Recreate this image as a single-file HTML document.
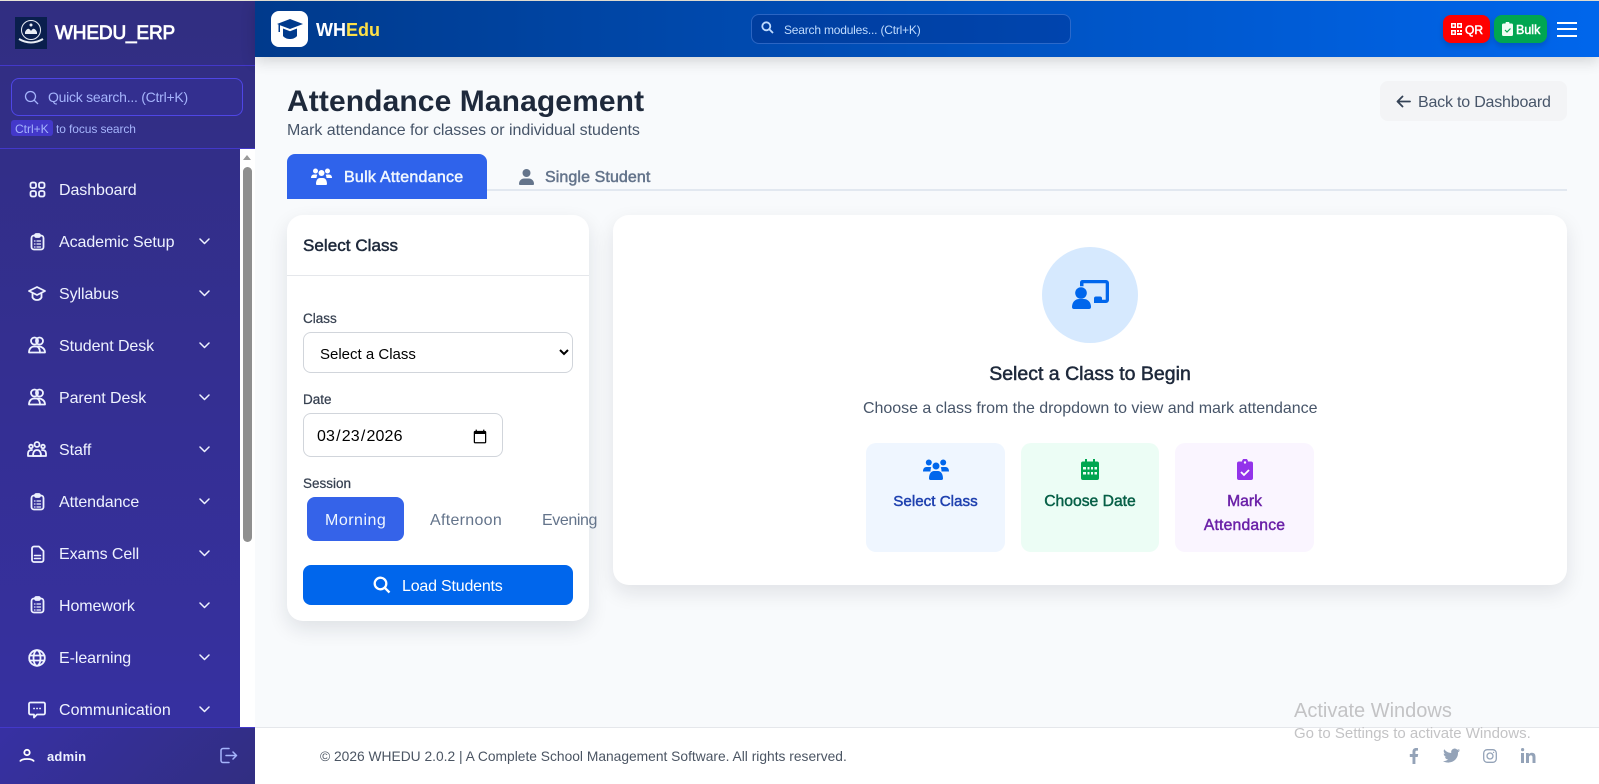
<!DOCTYPE html>
<html lang="en"><head><meta charset="utf-8"><title>Attendance Management</title>
<style>
*{box-sizing:border-box}
html,body{margin:0;padding:0;width:1599px;height:784px;overflow:hidden;background:#f8fafc;font-family:"Liberation Sans",sans-serif}
.a{position:absolute}
.t{position:absolute;white-space:nowrap;line-height:20px}
svg{position:absolute;display:block}
#side{left:0;top:1px;width:255px;height:783px;background:linear-gradient(180deg,#312e81,#3730a3)}
.mi{position:absolute;left:59px;font-size:16px;line-height:20px;color:#eef2ff;white-space:nowrap;letter-spacing:-.08px}
.ic{fill:none;stroke:#eef2ff;stroke-width:1.8;stroke-linecap:round;stroke-linejoin:round}
.lb{font-size:13.5px;color:#374151;-webkit-text-stroke:.25px #374151}
.mc{font-size:15.7px;-webkit-text-stroke:.45px currentColor;text-align:center}
</style></head><body>
<div class="a" style="left:0;top:0;width:1599px;height:1px;background:#e8e4d8"></div>
<div class="a" style="left:255px;top:1px;width:1344px;height:56px;background:linear-gradient(90deg,#003a8c,#0066ec);box-shadow:0 4px 14px rgba(0,0,0,.16);z-index:3"></div>

<!-- SIDEBAR -->
<div class="a" id="side"></div>
<div class="a" style="left:15px;top:17px;width:32px;height:32px;background:#0a1f4d"></div>
<svg style="left:15px;top:17px" width="32" height="32" viewBox="0 0 32 32" fill="none" stroke="#e8edf5"><circle cx="16" cy="13" r="9.5" stroke-width="1"/><path d="M10 15q3-6 6-1q3-5 6 1v2H10z" fill="#e8edf5" stroke="none"/><circle cx="16" cy="8" r="1.5" fill="#e8edf5" stroke="none"/><path d="M4 22q12 7 24 0" stroke-width="2"/></svg>
<div class="t" style="left:55px;top:24px;font-size:19px;color:#fff;-webkit-text-stroke:.8px #fff;letter-spacing:-.15px">WHEDU_ERP</div>
<div class="a" style="left:0;top:65px;width:255px;height:1px;background:#4338ca"></div>
<div class="a" style="left:11px;top:78px;width:232px;height:38px;background:#332f8f;border:1px solid #4f46e5;border-radius:8px"></div>
<svg style="left:24px;top:90px" width="15" height="15" viewBox="0 0 15 15" fill="none" stroke="#a5b4fc" stroke-width="1.3"><circle cx="6.5" cy="6.5" r="5"/><path d="M10.2 10.2L14 14"/></svg>
<div class="t" style="left:48px;top:87px;font-size:14px;color:#a5b4fc;letter-spacing:-.25px">Quick search... (Ctrl+K)</div>
<div class="a" style="left:11px;top:120px;width:42px;height:16px;background:#4338ca;border-radius:3px"></div>
<div class="t" style="left:15px;top:119px;font-size:12px;color:#a5b4fc">Ctrl+K</div>
<div class="t" style="left:56px;top:119px;font-size:12px;color:#a5b4fc;letter-spacing:-.1px">to focus search</div>
<div class="a" style="left:0;top:148px;width:255px;height:1px;background:#4338ca"></div>
<div class="a" style="left:240px;top:149px;width:15px;height:578px;background:#fff"></div>
<div class="a" style="left:243px;top:155px;width:0;height:0;border-left:4px solid transparent;border-right:4px solid transparent;border-bottom:5px solid #9a9a9a"></div>
<div class="a" style="left:243px;top:167px;width:9px;height:375px;background:#8f8f8f;border-radius:5px"></div>

<svg class="ic" style="left:29px;top:181px" width="17" height="17" viewBox="0 0 17 17"><rect x="1.5" y="1.5" width="5.5" height="5.5" rx="1.8"/><rect x="10" y="1.5" width="5.5" height="5.5" rx="1.8"/><rect x="1.5" y="10" width="5.5" height="5.5" rx="1.8"/><rect x="10" y="10" width="5.5" height="5.5" rx="1.8"/></svg>
<div class="mi" style="top:181px">Dashboard</div>

<svg class="ic" style="left:29px;top:233px" width="17" height="18" viewBox="0 0 17 18"><rect x="2.5" y="2.5" width="12" height="14" rx="2.5"/><rect x="6" y="1" width="5" height="3" rx="1.2"/><path d="M5.5 8h.5M8 8h3.5M5.5 11h.5M8 11h3.5M5.500 14h.5M8 14h3.500" stroke-width="1.3"/></svg>
<div class="mi" style="top:233px">Academic Setup</div>

<svg class="ic" style="left:28px;top:285px" width="18" height="17" viewBox="0 0 18 17"><path d="M1 6l8-4 8 4-8 4z"/><path d="M4.5 8v4.5c1 1.6 3 2.5 4.500 2.500s3.500-.9 4.500-2.500V8"/></svg>
<div class="mi" style="top:285px">Syllabus</div>

<svg class="ic" style="left:28px;top:336px" width="18" height="18" viewBox="0 0 18 18"><circle cx="6.500" cy="5" r="3.500"/><circle cx="11.500" cy="5" r="3.500"/><path d="M1 16.500c0-4 2.500-6 5-6h5c2.500 0 6 2 6 6z"/><path d="M9 10.500c2 1 3 3 3 6"/></svg>
<div class="mi" style="top:337px">Student Desk</div>

<svg class="ic" style="left:28px;top:388px" width="18" height="18" viewBox="0 0 18 18"><circle cx="6.500" cy="5" r="3.500"/><circle cx="11.500" cy="5" r="3.500"/><path d="M1 16.500c0-4 2.500-6 5-6h5c2.500 0 6 2 6 6z"/><path d="M9 10.500c2 1 3 3 3 6"/></svg>
<div class="mi" style="top:389px">Parent Desk</div>

<svg class="ic" style="left:27px;top:441px" width="20" height="16" viewBox="0 0 20 16" stroke-width="1.500"><circle cx="10" cy="3.500" r="2.500"/><circle cx="4" cy="5.500" r="1.800"/><circle cx="16" cy="5.500" r="1.800"/><path d="M6 15c0-4 1.500-6 4-6s4 2 4 6z"/><path d="M1 15v-2.500C1 10 2.500 9 5 9M19 15v-2.500C19 10 17.500 9 15 9M1 15h18"/></svg>
<div class="mi" style="top:441px">Staff</div>

<svg class="ic" style="left:29px;top:493px" width="17" height="18" viewBox="0 0 17 18"><rect x="2.500" y="2.500" width="12" height="14" rx="2.500"/><rect x="6" y="1" width="5" height="3" rx="1.200"/><path d="M5.500 8h.5M8 8h3.500M5.500 11h.5M8 11h3.500M5.500 14h.5M8 14h3.500" stroke-width="1.300"/></svg>
<div class="mi" style="top:493px">Attendance</div>

<svg class="ic" style="left:29px;top:545px" width="17" height="18" viewBox="0 0 17 18"><path d="M5 1.500h5l4.500 4.500v9a2 2 0 0 1-2 2h-7.500a2 2 0 0 1-2-2v-11.500a2 2 0 0 1 2-2z"/><path d="M5.500 10.500h6M5.500 13.500h6" stroke-width="1.500"/></svg>
<div class="mi" style="top:545px">Exams Cell</div>

<svg class="ic" style="left:29px;top:596px" width="17" height="18" viewBox="0 0 17 18"><rect x="2.500" y="2.500" width="12" height="14" rx="2.500"/><rect x="6" y="1" width="5" height="3" rx="1.200"/><path d="M5.500 8h.5M8 8h3.500M5.500 11h.5M8 11h3.500M5.500 14h.5M8 14h3.500" stroke-width="1.300"/></svg>
<div class="mi" style="top:597px">Homework</div>

<svg class="ic" style="left:28px;top:649px" width="18" height="18" viewBox="0 0 18 18"><circle cx="9" cy="9" r="7.800"/><ellipse cx="9" cy="9" rx="3.500" ry="7.800"/><path d="M1.500 6.500h15M1.500 11.500h15"/></svg>
<div class="mi" style="top:649px">E-learning</div>

<svg class="ic" style="left:28px;top:701px" width="18" height="18" viewBox="0 0 18 18"><path d="M2.500 1.500h13a1.500 1.500 0 0 1 1.500 1.500v9a1.500 1.500 0 0 1-1.500 1.500H9l-3 3v-3H2.500A1.500 1.500 0 0 1 1 12V3a1.500 1.500 0 0 1 1.500-1.500z"/><path d="M6 7.500h.1M9 7.500h.1M12 7.500h.1"/></svg>
<div class="mi" style="top:701px;letter-spacing:.05px">Communication</div>

<svg style="left:199px;top:237px" width="11" height="300" viewBox="0 0 11 300" fill="none" stroke="#eef2ff" stroke-width="1.500" stroke-linecap="round" stroke-linejoin="round"><path d="M1 2l4.500 4.500L10 2M1 54l4.500 4.500L10 54M1 106l4.500 4.500L10 106M1 158l4.500 4.500L10 158M1 210l4.500 4.500L10 210M1 262l4.500 4.500L10 262"/></svg>
<svg style="left:199px;top:549px" width="11" height="170" viewBox="0 0 11 170" fill="none" stroke="#eef2ff" stroke-width="1.500" stroke-linecap="round" stroke-linejoin="round"><path d="M1 2l4.500 4.500L10 2M1 54l4.500 4.500L10 54M1 106l4.500 4.500L10 106M1 158l4.500 4.500L10 158"/></svg>

<div class="a" style="left:0;top:727px;width:255px;height:57px;background:linear-gradient(135deg,#3730a3,#312e81);border-top:1px solid #4338ca"></div>
<svg style="left:19px;top:748px" width="16" height="15" viewBox="0 0 16 15" fill="none" stroke="#fff" stroke-width="1.800"><circle cx="8" cy="4.500" r="2.700"/><path d="M1 13.500c1-2 4-2.500 7-2.500s6 .5 7 2.500"/></svg>
<div class="t" style="left:47px;top:747px;font-size:13px;font-weight:700;color:#eef2ff;letter-spacing:.2px">admin</div>
<svg style="left:220px;top:747px" width="18" height="17" viewBox="0 0 18 17" fill="none" stroke="#a5b4fc" stroke-width="1.500" stroke-linecap="round" stroke-linejoin="round"><path d="M9 1.500H3a2 2 0 0 0-2 2v10a2 2 0 0 0 2 2h6M6 8.500h10.500M13 5l3.500 3.500L13 12"/></svg>

<!-- HEADER -->
<div class="a" style="left:271px;top:11px;width:37px;height:36px;background:#fff;border-radius:8px;z-index:4"></div>
<svg style="left:277px;top:18px;z-index:4" width="26" height="22" viewBox="0 0 26 22" fill="#003a8c"><path d="M13 1L26 6 13 11 3 7.300V14H1.500V6.500L0 6z"/><path d="M6 10.500l7 2.700 7-2.700V18c-2 2.500-5 3-7 3s-5-.5-7-3z"/></svg>
<div class="t" style="left:316px;top:20px;font-size:18px;font-weight:700;color:#fff;z-index:4">WH<span style="color:#fde047">Edu</span></div>
<div class="a" style="left:751px;top:14px;width:320px;height:30px;background:rgba(0,40,130,.35);border:1px solid rgba(96,150,240,.45);border-radius:8px;z-index:4"></div>
<svg style="left:761px;top:21px;z-index:4" width="13" height="13" viewBox="0 0 13 13" fill="none" stroke="#bfdbfe" stroke-width="1.800"><circle cx="5.300" cy="5.300" r="4"/><path d="M8.300 8.300L12 12"/></svg>
<div class="t" style="left:784px;top:20px;font-size:12px;color:#bfdbfe;z-index:4;letter-spacing:-.2px">Search modules... (Ctrl+K)</div>

<div class="a" style="left:1443px;top:15px;width:47px;height:28px;background:#ff0000;border-radius:8px;box-shadow:0 3px 6px rgba(0,0,0,.15);z-index:4"></div>
<svg style="left:1451px;top:23px;z-index:4" width="11" height="12" viewBox="0 0 11 12" fill="#fff"><path fill-rule="evenodd" d="M0 0h5v5H0zM1.500 1.500v2h2v-2zM6 0h5v5H6zM7.500 1.500v2h2v-2zM0 7h5v5H0zM1.500 8.500v2h2v-2zM6 7h2v2H6zM9 7h2v2H9zM6 10h5v2H6z"/></svg>
<div class="t" style="left:1465px;top:20px;font-size:12px;color:#fff;-webkit-text-stroke:.5px #fff;z-index:4">QR</div>
<div class="a" style="left:1494px;top:15px;width:53px;height:28px;background:#00a651;border-radius:8px;box-shadow:0 3px 6px rgba(0,0,0,.15);z-index:4"></div>
<svg style="left:1502px;top:22px;z-index:4" width="11" height="14" viewBox="0 0 11 14"><path fill="#f0fdf4" d="M3.500 1.500a2 2 0 0 1 4 0H9.500a1.500 1.500 0 0 1 1.500 1.500v9.500a1.500 1.500 0 0 1-1.500 1.500h-8A1.500 1.500 0 0 1 0 12.500V3a1.500 1.500 0 0 1 1.500-1.500z"/><path d="M3 8l2 2 3.500-3.500" fill="none" stroke="#00a651" stroke-width="1.200"/></svg>
<div class="t" style="left:1516px;top:20px;font-size:12.500px;color:#fff;-webkit-text-stroke:.5px #fff;z-index:4">Bulk</div>
<div class="a" style="left:1557px;top:22px;width:20px;height:2px;background:#fff;z-index:4"></div>
<div class="a" style="left:1557px;top:28px;width:20px;height:2px;background:#fff;z-index:4"></div>
<div class="a" style="left:1557px;top:35px;width:20px;height:2px;background:#fff;z-index:4"></div>

<!-- PAGE HEAD -->
<div class="t" style="left:287px;top:84px;font-size:30px;line-height:36px;font-weight:700;color:#1e293b;letter-spacing:.1px">Attendance Management</div>
<div class="t" style="left:287px;top:121px;font-size:16px;color:#475569;letter-spacing:-.04px">Mark attendance for classes or individual students</div>
<div class="a" style="left:1380px;top:81px;width:187px;height:40px;background:#f3f4f6;border-radius:8px"></div>
<svg style="left:1396px;top:95px" width="15" height="13" viewBox="0 0 15 13" fill="none" stroke="#334155" stroke-width="1.800" stroke-linecap="round" stroke-linejoin="round"><path d="M14 6.500H1.500M6.500 1.500l-5 5 5 5"/></svg>
<div class="t" style="left:1418px;top:93px;font-size:16px;color:#475569;letter-spacing:-.2px">Back to Dashboard</div>

<!-- TABS -->
<div class="a" style="left:287px;top:189px;width:1280px;height:2px;background:#e2e8f0"></div>
<div class="a" style="left:287px;top:154px;width:200px;height:45px;background:#2f63eb;border-radius:8px 8px 0 0"></div>
<svg style="left:311px;top:168px" width="21" height="17" viewBox="0 0 21 17" fill="#fff"><circle cx="4.500" cy="3" r="2.500"/><circle cx="16.500" cy="3" r="2.500"/><circle cx="10.500" cy="5" r="3"/><path d="M0 10c0-2 1-3.500 3-3.500h2c.6 0 1 .1 1.400.3C6 7.500 5.500 9 5.500 10zM21 10c0-2-1-3.500-3-3.500h-2c-.6 0-1 .1-1.400.3.500.8.900 2.200.900 3.200zM5 16c0-4 1.800-6 4-6h3c2.200 0 4 2 4 6 0 .6-.4 1-1 1H6c-.6 0-1-.4-1-1z"/></svg>
<div class="t" style="left:344px;top:168px;font-size:16px;color:#eff6ff;-webkit-text-stroke:.5px #eff6ff;letter-spacing:.25px">Bulk Attendance</div>
<svg style="left:519px;top:169px" width="15" height="16" viewBox="0 0 15 16" fill="#64748b"><circle cx="7.500" cy="4" r="4"/><path d="M0 15c0-3.500 2.500-5.500 5-5.500h5c2.500 0 5 2 5 5.500 0 .6-.4 1-1 1H1c-.6 0-1-.4-1-1z"/></svg>
<div class="t" style="left:545px;top:168px;font-size:16px;color:#64748b;-webkit-text-stroke:.5px #64748b;letter-spacing:.1px">Single Student</div>

<!-- LEFT CARD -->
<div class="a" style="left:287px;top:215px;width:302px;height:406px;background:#fff;border-radius:16px;box-shadow:0 8px 20px rgba(15,23,42,.11)"></div>
<div class="t" style="left:303px;top:236px;font-size:17px;color:#1e293b;-webkit-text-stroke:.5px #1e293b;letter-spacing:.05px">Select Class</div>
<div class="a" style="left:287px;top:275px;width:302px;height:1px;background:#e5e7eb"></div>
<div class="t lb" style="left:303px;top:309px">Class</div>
<select class="a" style="left:303px;top:332px;width:270px;height:41px;border:1px solid #d1d5db;border-radius:8px;background:#fff;padding:3px 12px 0;font:15px 'Liberation Sans',sans-serif;color:#000"><option>Select a Class</option></select>
<div class="t lb" style="left:303px;top:390px">Date</div>
<input class="a" type="date" value="2026-03-23" style="left:303px;top:413px;width:200px;height:44px;border:1px solid #d1d5db;border-radius:8px;background:#fff;padding:3px 12px 0;font:16px 'Liberation Sans',sans-serif;color:#000;letter-spacing:.15px">
<div class="t lb" style="left:303px;top:474px">Session</div>
<div class="a" style="left:307px;top:497px;width:97px;height:44px;background:#3563e9;border-radius:8px"></div>
<div class="t" style="left:325px;top:511px;font-size:16px;color:#eff6ff;letter-spacing:.5px">Morning</div>
<div class="t" style="left:430px;top:511px;font-size:16px;color:#64748b;letter-spacing:.3px">Afternoon</div>
<div class="t" style="left:542px;top:511px;font-size:16px;color:#64748b;letter-spacing:-.4px">Evening</div>
<div class="a" style="left:303px;top:565px;width:270px;height:40px;background:#0066ec;border-radius:8px"></div>
<svg style="left:373px;top:576px" width="18" height="18" viewBox="0 0 18 18" fill="none" stroke="#fff" stroke-width="2.300"><circle cx="7.500" cy="7.500" r="5.800"/><path d="M11.800 11.800L16.500 16.500"/></svg>
<div class="t" style="left:402px;top:577px;font-size:16px;color:#fff;letter-spacing:-.2px">Load Students</div>

<!-- RIGHT CARD -->
<div class="a" style="left:613px;top:215px;width:954px;height:370px;background:#fff;border-radius:16px;box-shadow:0 8px 20px rgba(15,23,42,.1)"></div>
<div class="a" style="left:1042px;top:247px;width:96px;height:96px;border-radius:50%;background:#d6e9fe"></div>
<svg style="left:1071px;top:279px" width="38" height="31" viewBox="0 0 38 31" fill="#0066ec"><circle cx="10" cy="14" r="5.800"/><path d="M1 28c0-5 3.500-8 7-8h5c3.500 0 7 3 7 8 0 1.200-.8 2-2 2H3c-1.200 0-2-.8-2-2z"/><path d="M12 1h23a3 3 0 0 1 3 3v17a3 3 0 0 1-3 3h-5v-3.300h4.700V4.300H12.500v3H9V3.500A2.500 2.500 0 0 1 12 1z"/><path d="M23 22v-2.500a2 2 0 0 1 2-2h4a2 2 0 0 1 2 2V24H23z"/></svg>
<div class="t" style="left:989px;top:364px;font-size:19.500px;color:#1e293b;-webkit-text-stroke:.5px #1e293b;width:202px;text-align:center">Select a Class to Begin</div>
<div class="t" style="left:863px;top:399px;width:454px;text-align:center;font-size:16px;color:#475569;letter-spacing:-.03px">Choose a class from the dropdown to view and mark attendance</div>

<div class="a" style="left:866px;top:443px;width:139px;height:109px;background:#eff6ff;border-radius:10px"></div>
<svg style="left:923px;top:459px" width="26" height="21" viewBox="0 0 26 21" fill="#0066ec"><circle cx="5.800" cy="3.500" r="3"/><circle cx="20.200" cy="3.500" r="3"/><circle cx="13" cy="7" r="3.500"/><path d="M0 12.500c0-3 1.500-4.500 3.500-4.500h3.500c.5 0 1 .1 1.300.3-.5 1-.8 2.500-.8 4.200zM26 12.500c0-3-1.500-4.500-3.500-4.500H19c-.5 0-1 .1-1.300.3.500 1 .8 2.500.8 4.200zM6 19.500c0-5 2.500-7.500 5-7.500h4c2.500 0 5 2.500 5 7.500 0 .8-.5 1.500-1.500 1.500h-11C6.500 21 6 20.300 6 19.500z"/></svg>
<div class="t mc" style="left:866px;top:492px;width:139px;color:#1e40af;font-size:15.200px">Select Class</div>

<div class="a" style="left:1021px;top:443px;width:138px;height:109px;background:#ecfdf5;border-radius:10px"></div>
<svg style="left:1081px;top:459px" width="18" height="21" viewBox="0 0 18 21" fill="#00a651"><path fill-rule="evenodd" d="M4 0h2v2.500h6V0h2v2.500h2a2 2 0 0 1 2 2V19a2 2 0 0 1-2 2H2a2 2 0 0 1-2-2V4.500a2 2 0 0 1 2-2h2zM2 8v2.500h3V8zM6.500 8v2.500h2V8zM10 8v2.500h2V8zM13.500 8v2.500H16V8zM2 13v2.500h3V13zM6.500 13v2.500h2V13zM10 13v2.500h2V13zM13.500 13v2.500H16V13z"/></svg>
<div class="t mc" style="left:1021px;top:492px;width:138px;color:#065f46">Choose Date</div>

<div class="a" style="left:1175px;top:443px;width:139px;height:109px;background:#faf5ff;border-radius:10px"></div>
<svg style="left:1237px;top:459px" width="16" height="21" viewBox="0 0 16 21"><path fill="#9333ea" d="M5 2.500a3 3 0 0 1 6 0h3a2 2 0 0 1 2 2V19a2 2 0 0 1-2 2H2a2 2 0 0 1-2-2V4.500a2 2 0 0 1 2-2z"/><circle cx="8" cy="3.500" r="1.200" fill="#faf5ff"/><path d="M4 13l3 3 5-5" fill="none" stroke="#fff" stroke-width="1.800"/></svg>
<div class="t mc" style="left:1175px;top:492px;width:139px;color:#6b21a8">Mark</div>
<div class="t mc" style="left:1175px;top:516px;width:139px;color:#6b21a8;letter-spacing:.2px">Attendance</div>

<!-- FOOTER -->
<div class="a" style="left:255px;top:727px;width:1344px;height:57px;background:#fff;border-top:1px solid #e5e7eb"></div>
<div class="t" style="left:320px;top:747px;font-size:13.800px;color:#4b5563">© 2026 WHEDU 2.0.2 | A Complete School Management Software. All rights reserved.</div>
<svg style="left:1409px;top:747px" width="12" height="18" viewBox="0 0 12 18" fill="#94a3b8"><path d="M3.500 17V10H.8V7H3.500V4.800C3.500 2.200 5 1 7.300 1c1 0 1.700.1 1.700.1v2.500H7.800C6.700 3.600 6.400 4.200 6.400 5V7h2.800l-.5 3H6.400v7z"/></svg>
<svg style="left:1443px;top:748px" width="17" height="15" viewBox="0 0 17 15" fill="#94a3b8"><path d="M17 2.300c-.6.300-1.300.5-2 .6.700-.4 1.300-1.100 1.500-1.900-.7.400-1.400.7-2.200.8a3.500 3.500 0 0 0-6 3.200C5.300 4.800 2.800 3.400 1.200 1.200.3 2.800.7 4.800 2.300 5.900c-.6 0-1.100-.2-1.600-.4 0 1.700 1.200 3.200 2.800 3.500-.5.100-1 .2-1.600.1.500 1.400 1.800 2.400 3.300 2.400-1.500 1.200-3.400 1.700-5.200 1.500 5 3.200 11.500 1.300 14-3.700.8-1.500 1.100-3.200 1-4.900.7-.5 1.300-1.100 2-1.900z"/></svg>
<svg style="left:1483px;top:749px" width="14" height="14" viewBox="0 0 14 14" fill="none" stroke="#94a3b8" stroke-width="1.300"><rect x=".7" y=".7" width="12.600" height="12.600" rx="3.500"/><circle cx="7" cy="7" r="3"/><circle cx="10.600" cy="3.400" r=".7" fill="#94a3b8" stroke="none"/></svg>
<svg style="left:1521px;top:748px" width="15" height="15" viewBox="0 0 15 15" fill="#94a3b8"><path d="M0 5h3v10H0zM0 1.600a1.600 1.600 0 1 1 3.200 0 1.600 1.600 0 0 1-3.200 0zM5 5h2.800v1.400C8.300 5.500 9.400 4.800 10.800 4.800c3 0 3.700 1.900 3.700 4.500V15h-3V9.900c0-1.300-.1-2.500-1.700-2.500S8 8.600 8 9.900V15H5z"/></svg>

<!-- WINDOWS WATERMARK -->
<div class="t" style="left:1294px;top:699px;font-size:20px;line-height:24px;color:#c3c3c5;z-index:5">Activate Windows</div>
<div class="t" style="left:1294px;top:724px;font-size:15px;color:#c3c3c5;z-index:5">Go to Settings to activate Windows.</div>
</body></html>
